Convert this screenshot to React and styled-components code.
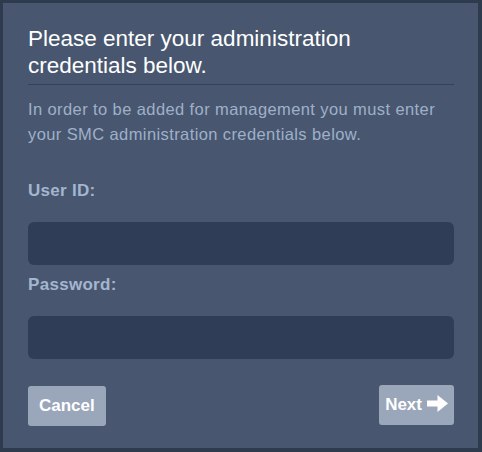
import styled, { createGlobalStyle } from 'styled-components';

const Global = createGlobalStyle`
    html, body {
        margin:0;
        padding:0;
        background:#2e3a4e;
    }
    body {
        font-family:"Liberation Sans", Arial, sans-serif;
    }
`;

const Backdrop = styled.div`
    width:482px;
    height:452px;
    padding:3px 4px 4px 3px;
    box-sizing:border-box;
    background:#2e3a4e;
`;
const Dialog = styled.div`
    height:100%;
    box-sizing:border-box;
    background:#48576f;
    padding:22px 24px 0 25px;
    display:flex;
    flex-direction:column;
`;
const Title = styled.h1`
    margin:0;
    font-size:22.5px;
    font-weight:normal;
    line-height:27px;
    color:#ffffff;
    padding-bottom:5px;
    border-bottom:1px solid #35425a;
`;
const Intro = styled.p`
    margin:12px 0 0 0;
    font-size:16.5px;
    letter-spacing:0.4px;
    line-height:25px;
    color:#9fb0c9;
`;
const Label = styled.label`
    display:block;
    font-size:17px;
    letter-spacing:0.3px;
    font-weight:bold;
    color:#a4b5cf;
    margin-top:${p => p.$top}px;
    margin-bottom:${p => p.$bottom}px;
    line-height:18px;
`;
const Field = styled.input`
    display:block;
    width:100%;
    height:43px;
    box-sizing:border-box;
    border:none;
    border-radius:6px;
    background:#2f3d56;
    color:#ffffff;
    outline:none;
    padding:0 10px;
    font-family:inherit;
    font-size:15px;
`;
const Footer = styled.div`
    display:flex;
    justify-content:space-between;
    align-items:flex-start;
    margin-top:26px;
`;
const Button = styled.button`
    display:flex;
    align-items:center;
    gap:5px;
    height:40px;
    padding:0 ${p => p.$pad}px;
    margin-top:${p => p.$top}px;
    border:none;
    border-radius:3px;
    background:#9aa6ba;
    color:#ffffff;
    font-family:inherit;
    font-size:17px;
    font-weight:bold;
    cursor:pointer;
    svg {
        margin-top:-4px;
    }
`;

const ArrowIcon = () => (
    <svg width="21" height="17" viewBox="0 0 21 17">
        <path d="M0 5.5 H10.5 V0 L21 8.5 L10.5 17 V11.5 H0 Z" fill="#ffffff"/>
    </svg>
);

const App = ()=>{
    return (
        <>
            <Global/>
            <Backdrop>
                <Dialog>
                    <Title>Please enter your administration credentials below.</Title>
                    <Intro>
                        In order to be added for management you must enter your SMC administration credentials below.
                    </Intro>
                    <Label $top={35} $bottom={22}>User ID:</Label>
                    <Field type="text"/>
                    <Label $top={11} $bottom={22}>Password:</Label>
                    <Field type="password"/>
                    <Footer>
                        <Button $pad={11} $top={1}>Cancel</Button>
                        <Button $pad={6} $top={0}>Next<ArrowIcon/></Button>
                    </Footer>
                </Dialog>
            </Backdrop>
        </>
    )
}

export default App
